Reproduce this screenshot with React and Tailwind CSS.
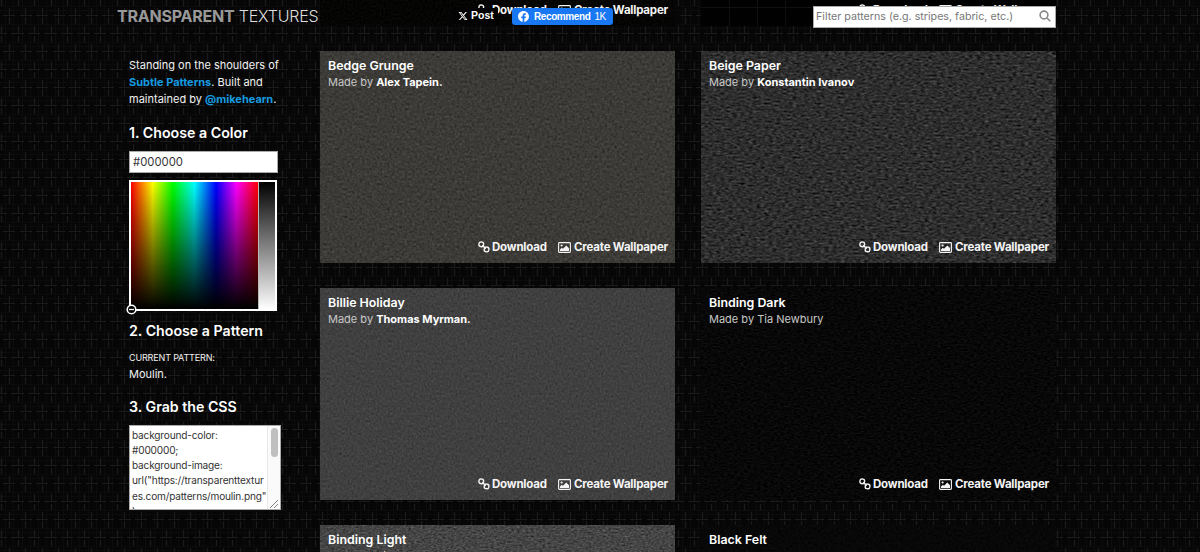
import React, { useState } from 'react';

const HUES = 'bg-[linear-gradient(to_right,#f00,#ff0_17%,#0f0_33%,#0ff_50%,#00f_67%,#f0f_83%,#f00)]';

const patterns = [
  { name: 'Batthern', author: 'Factorio.us', bold: true, freq: '0.5 0.5', gain: 0.14, rgb: [0.02, 0.018, 0.015] },
  { name: 'Beige Felt', author: 'Tiles', bold: true, freq: '0.4 0.4', gain: 0.03, rgb: [0.005, 0.005, 0.005], grid: true },
  { name: 'Bedge Grunge', author: 'Alex Tapein.', bold: true, freq: '0.4 0.4', gain: 0.3, rgb: [0.235, 0.23, 0.215] },
  { name: 'Beige Paper', author: 'Konstantin Ivanov', bold: true, freq: '0.25 0.5', gain: 0.6, rgb: [0.178, 0.178, 0.18] },
  { name: 'Billie Holiday', author: 'Thomas Myrman.', bold: true, freq: '0.5 0.4', gain: 0.24, rgb: [0.25, 0.25, 0.255] },
  { name: 'Binding Dark', author: 'Tia Newbury', bold: false, freq: '0.3 0.6', gain: 0.2, rgb: [0.03, 0.03, 0.03] },
  { name: 'Binding Light', author: 'Tia Newbury', bold: false, freq: '0.35 0.55', gain: 0.5, rgb: [0.27, 0.27, 0.27] },
  { name: 'Black Felt', author: 'Evan Eckard', bold: false, freq: '0.4 0.4', gain: 0.1, rgb: [0.03, 0.03, 0.03] },
];

function Moulin() {
  return (
    <svg className="absolute inset-0 h-full w-full" aria-hidden="true">
      <defs>
        <pattern id="moulin" width="33" height="36" patternUnits="userSpaceOnUse">
          <rect width="33" height="36" fill="#060606" />
          <path d="M0 6.5h33M0 10.5h33M0 24.5h33M0 28.5h33M5.5 0v36M13.5 0v36M22.5 0v36M30.5 0v36" stroke="#0c0c0c" />
          <g stroke="#1b1b1b" strokeWidth="1.2">
            <path d="M3 15.5h12M20 15.5h12M-5 33.5h12M11 33.5h13M28 33.5h8" />
            <path d="M9.5 8v7M9.5 17v7M25.5 8v7M25.5 17v7M1.5 26v7M18.5 26v7M1.5 0v6M18.5 0v6" />
          </g>
        </pattern>
      </defs>
      <rect width="100%" height="100%" fill="url(#moulin)" />
    </svg>
  );
}

function Texture({ id, freq, gain, rgb, grid }) {
  const rows = rgb.map((c) => `${gain / 3} ${gain / 3} ${gain / 3} 0 ${c - gain / 2}`).join(' ');
  return (
    <svg className="absolute inset-0 h-full w-full" aria-hidden="true">
      <filter id={id} x="0" y="0" width="100%" height="100%" colorInterpolationFilters="sRGB">
        <feTurbulence type="fractalNoise" baseFrequency={freq} numOctaves="3" seed="4" />
        <feColorMatrix values={`${rows} 0 0 0 0 1`} />
      </filter>
      <rect width="100%" height="100%" filter={`url(#${id})`} />
      {grid && <path d="M28.5 0v212M56.5 0v212M84.5 0v212M0 193.5h355" stroke="#101010" />}
    </svg>
  );
}

function LinkIcon() {
  return (
    <svg className="h-3 w-3 -translate-y-px" viewBox="0 0 12 12" fill="none" stroke="#f4f4f4" strokeWidth="1.4">
      <rect x="1" y="1" width="4.6" height="4.6" rx="1.8" transform="rotate(8 3 3)" />
      <rect x="6.2" y="6.2" width="4.6" height="4.6" rx="1.8" transform="rotate(8 9 9)" />
      <path d="M4.3 4.3l3.4 3.4" />
    </svg>
  );
}

function PictureIcon() {
  return (
    <svg className="h-[11px] w-[13px]" viewBox="0 0 13 11">
      <rect x=".6" y=".6" width="11.8" height="9.8" rx=".8" fill="none" stroke="#f4f4f4" strokeWidth="1.1" />
      <circle cx="3.6" cy="3.5" r="1.1" fill="#f4f4f4" />
      <path d="M2 9V7.4l1.8-1.7 1.2 1.1L8.3 3.5 11 6.2V9z" fill="#f4f4f4" />
    </svg>
  );
}

function PatternCard({ pattern, index }) {
  return (
    <div className="relative flex h-[212px] flex-col justify-between overflow-hidden pt-[6px] pr-[7px] pb-[7px] pl-2">
      <Texture id={`texture-${index}`} freq={pattern.freq} gain={pattern.gain} rgb={pattern.rgb} grid={pattern.grid} />
      <div className="relative">
        <h3 className="text-[12.4px] leading-[17px] font-semibold text-white">{pattern.name}</h3>
        <p className="text-[11px] leading-[16px] text-[#c8c8c8]">
          Made by <span className={pattern.bold ? 'font-bold text-white' : ''}>{pattern.author}</span>
        </p>
      </div>
      <div className="relative flex items-center justify-end text-[11.5px] leading-[17px] font-bold text-[#f4f4f4]">
        <LinkIcon />
        <span className="ml-[2px] w-[55px] whitespace-nowrap tracking-[-0.2px]">Download</span>
        <span className="ml-[11px] flex"><PictureIcon /></span>
        <span className="ml-[3px] w-[94px] whitespace-nowrap tracking-[-0.2px]">Create Wallpaper</span>
      </div>
    </div>
  );
}

function Header() {
  return (
    <header className="absolute inset-x-0 top-0 h-8">
      <div className="flex items-start pl-[117px]">
        <h1 className="mt-[6px] w-[335px] text-[16px] leading-[20px] font-light tracking-[-0.22px] whitespace-nowrap text-[#dedede]">
          <strong className="font-bold text-[#999]">TRANSPARENT</strong> TEXTURES
        </h1>
        <div className="mt-2 flex h-4 w-[46px] items-center bg-[#030303] pl-[6px] font-['Liberation_Sans'] text-[10.5px] font-bold text-white">
          <svg className="mr-[3px] h-[10px] w-[10px] shrink-0" viewBox="0 0 24 24" fill="#fff">
            <path d="M18.24 2.25h3.31l-7.23 8.26 8.5 11.24h-6.66l-5.21-6.82-5.97 6.82H1.68l7.73-8.84L1.25 2.25h6.83l4.71 6.23zm-1.16 17.52h1.83L7.08 4.13H5.12z" />
          </svg>
          Post
        </div>
        <button className="mt-2 ml-[14px] flex h-[17px] w-[101px] items-center rounded-[3px] bg-[#1877f2] pl-[6px] font-['Liberation_Sans'] text-[10px] font-bold tracking-[-0.4px] whitespace-nowrap text-white">
          <svg className="mr-[5px] h-[11px] w-[11px] shrink-0" viewBox="0 0 24 24" fill="#fff">
            <path d="M24 12.07C24 5.4 18.63 0 12 0S0 5.4 0 12.07C0 18.1 4.39 23.1 10.13 24v-8.44H7.08v-3.49h3.05V9.41c0-3.02 1.79-4.69 4.53-4.69 1.31 0 2.68.24 2.68.24v2.97h-1.51c-1.49 0-1.96.93-1.96 1.89v2.25h3.33l-.53 3.49h-2.8V24C19.61 23.1 24 18.1 24 12.07z" />
          </svg>
          Recommend <span className="ml-1 font-normal">1K</span>
        </button>
        <label className="mt-[6px] ml-[200px] flex h-[22px] w-[243px] items-center border border-[#aaa] bg-white pr-[4px] pl-[2px]">
          <input className="w-[220px] text-[10.7px] text-[#333] outline-none placeholder:text-[#777]" placeholder="Filter patterns (e.g. stripes, fabric, etc.)" />
          <svg className="ml-auto h-3 w-3 -translate-y-px" viewBox="0 0 12 12" fill="none" stroke="#888" strokeWidth="1.6">
            <circle cx="5" cy="5" r="3.9" />
            <path d="M8 8l3.3 3.3" />
          </svg>
        </label>
      </div>
    </header>
  );
}

function Sidebar({ color, setColor }) {
  return (
    <aside className="w-[191px] pt-[57px] text-[11px] text-[#f2f2f2]">
      <p className="leading-[17.2px] whitespace-nowrap">
        Standing on the shoulders of<br />
        <a className="font-bold text-[#159be0]">Subtle Patterns</a>. Built and<br />
        maintained by <a className="font-bold text-[#159be0]">@mikehearn</a>.
      </p>
      <h2 className="mt-[13.9px] text-[14.2px] leading-[20px] font-semibold text-white">1. Choose a Color</h2>
      <input
        className="mt-[8px] block h-[22px] w-[149px] border border-[#aaa] bg-white pl-[3px] text-[11.3px] text-[#333] outline-none"
        value={color}
        onChange={(e) => setColor(e.target.value)}
      />
      <div className="relative mt-[7px] flex h-[131px] w-[148px] border-2 border-white">
        <div className={`h-full w-[127px] ${HUES}`}>
          <div className="h-full bg-[linear-gradient(to_bottom,transparent,#000)]" />
        </div>
        <div className="h-full flex-1 border-l border-[#bbb] bg-[linear-gradient(to_bottom,#000,#fff)]" />
        <svg className="absolute -bottom-[6px] -left-[5px] h-[11px] w-[11px]" viewBox="0 0 11 11">
          <circle cx="5.5" cy="5.5" r="4.3" fill="#000" stroke="#fff" strokeWidth="1.6" />
          <path d="M3 5.5h5" stroke="#fff" strokeWidth="1.3" />
        </svg>
      </div>
      <h2 className="mt-[10px] text-[14.2px] leading-[20px] font-semibold text-white">2. Choose a Pattern</h2>
      <p className="mt-[10px] text-[9px] leading-[14px] tracking-[-0.15px]">CURRENT PATTERN:</p>
      <p className="mt-[1px] leading-[17px]">Moulin.</p>
      <h2 className="mt-[14px] text-[14.2px] leading-[20px] font-semibold text-white">3. Grab the CSS</h2>
      <div className="mt-[8px] flex h-[85px] w-[152px] overflow-hidden border border-[#aaa] bg-white">
        <p className="w-[138px] pt-[2px] pl-[2px] text-[10.1px] leading-[15.3px] tracking-[-0.18px] whitespace-nowrap text-[#333]">
          background-color:<br />{color};<br />background-image:<br />
          url("https://transparenttextur<br />es.com/patterns/moulin.png"<br />);
        </p>
        <div className="flex w-[13px] shrink-0 flex-col items-center justify-between border-l border-[#e8e8e8] bg-[#fafafa] pt-[2px]">
          <div className="h-[29px] w-[7px] rounded-full bg-[#bfbfbf]" />
          <svg className="h-[10px] w-[10px]" viewBox="0 0 10 10" stroke="#777" strokeWidth=".9">
            <path d="M1 9l8-8M5 9l4-4" />
          </svg>
        </div>
      </div>
    </aside>
  );
}

export default function App() {
  const [color, setColor] = useState('#000000');

  return (
    <div className="relative h-[552px] w-[1200px] overflow-hidden bg-black font-[Inter,sans-serif]">
      <Moulin />
      <main className="relative flex items-start pl-[129px]">
        <Sidebar color={color} setColor={setColor} />
        <div className="-mt-[186px] grid grid-cols-[355px_355px] gap-x-[26px] gap-y-[25px]">
          {patterns.map((pattern, i) => (
            <PatternCard key={pattern.name} pattern={pattern} index={i} />
          ))}
        </div>
      </main>
      <Header />
    </div>
  );
}
